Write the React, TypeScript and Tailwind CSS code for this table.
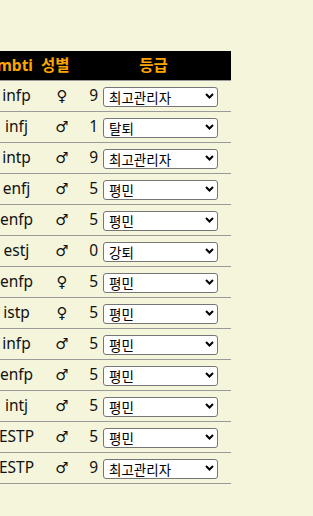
import React from "react";

type Member = { mbti: string; gender: "♀" | "♂"; level: number; grade: string };

const members: Member[] = [
  { mbti: "infp", gender: "♀", level: 9, grade: "최고관리자" },
  { mbti: "infj", gender: "♂", level: 1, grade: "탈퇴" },
  { mbti: "intp", gender: "♂", level: 9, grade: "최고관리자" },
  { mbti: "enfj", gender: "♂", level: 5, grade: "평민" },
  { mbti: "enfp", gender: "♂", level: 5, grade: "평민" },
  { mbti: "estj", gender: "♂", level: 0, grade: "강퇴" },
  { mbti: "enfp", gender: "♀", level: 5, grade: "평민" },
  { mbti: "istp", gender: "♀", level: 5, grade: "평민" },
  { mbti: "infp", gender: "♂", level: 5, grade: "평민" },
  { mbti: "enfp", gender: "♂", level: 5, grade: "평민" },
  { mbti: "intj", gender: "♂", level: 5, grade: "평민" },
  { mbti: "ESTP", gender: "♂", level: 5, grade: "평민" },
  { mbti: "ESTP", gender: "♂", level: 9, grade: "최고관리자" },
];

const grades = ["최고관리자", "평민", "탈퇴", "강퇴"];

const font = { fontFamily: '"Noto Sans", "Noto Sans CJK KR", sans-serif' };

function GradeSelect({ value }: { value: string }) {
  return (
    <div className="relative w-[115px] h-[20px]">
      <select
        defaultValue={value}
        className="appearance-none h-[20px] w-[115px] rounded-[3px] border border-[#767676] bg-white pl-[5px] text-[13.5px] leading-[18px] text-black"
        style={{ fontFamily: '"Noto Sans CJK KR", sans-serif' }}
      >
        {grades.map((g) => (
          <option key={g} value={g}>{g}</option>
        ))}
      </select>
      <svg
        className="pointer-events-none absolute right-[4px] top-[7px]"
        width="9"
        height="6"
        viewBox="0 0 9 6"
      >
        <path d="M1 1 L4.5 4.5 L8 1" fill="none" stroke="#000" strokeWidth="2" />
      </svg>
    </div>
  );
}

export default function App() {
  return (
    <div className="min-h-screen w-full bg-[#f5f5dc] overflow-hidden" style={font}>
      <div className="pt-[51px] w-[251px] ml-[-20px]">
        {/* header */}
        <div className="flex h-[30px] items-center bg-black border-b border-[#9a9a9a] text-[#ffa500] font-bold text-[15.5px]">
          <div className="w-[56px] shrink-0 pr-[3px] text-right">mbti</div>
          <div className="w-[40px] shrink-0 pl-[5px]">성별</div>
          <div className="flex-1 text-center">등급</div>
        </div>
        {members.map((m, i) => (
          <div key={i} className="flex h-[31px] items-center border-b border-[#9a9a9a] text-[15.5px] text-[#111]">
            <div className="w-[73px] shrink-0 text-center">{m.mbti}</div>
            <div className="w-[18px] shrink-0 text-center" style={{ fontFamily: '"DejaVu Sans", sans-serif', fontSize: 15 }}>{m.gender}</div>
            <div className="w-[27px] shrink-0 text-right">{m.level}</div>
            <div className="pl-[5px] shrink-0">
              <GradeSelect value={m.grade} />
            </div>
          </div>
        ))}
      </div>
    </div>
  );
}
